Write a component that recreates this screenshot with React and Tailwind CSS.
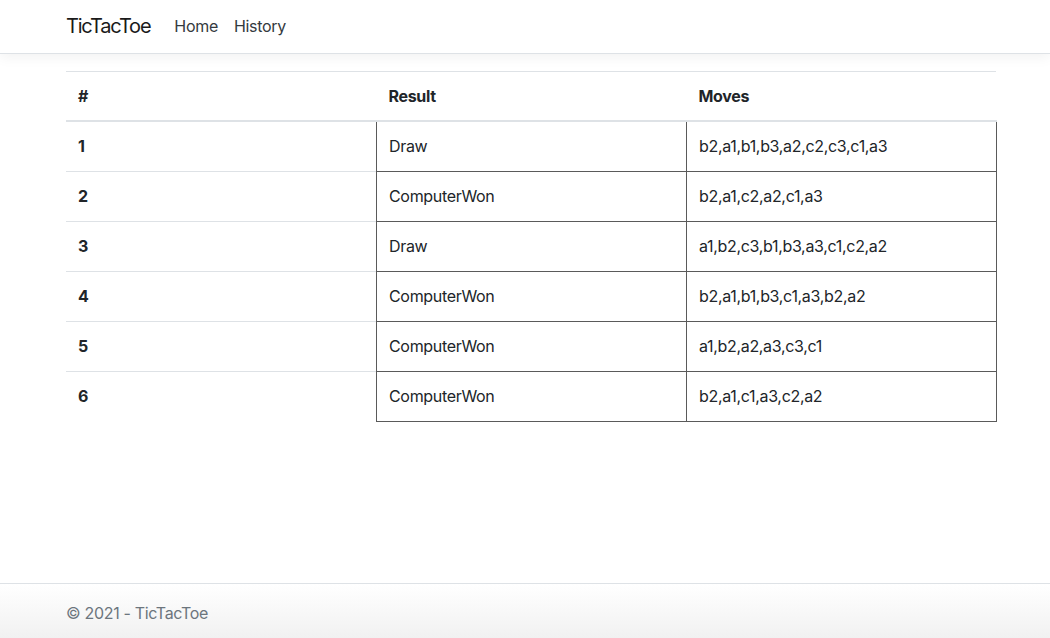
const games = [
  { id: 1, result: "Draw", moves: "b2,a1,b1,b3,a2,c2,c3,c1,a3" },
  { id: 2, result: "ComputerWon", moves: "b2,a1,c2,a2,c1,a3" },
  { id: 3, result: "Draw", moves: "a1,b2,c3,b1,b3,a3,c1,c2,a2" },
  { id: 4, result: "ComputerWon", moves: "b2,a1,b1,b3,c1,a3,b2,a2" },
  { id: 5, result: "ComputerWon", moves: "a1,b2,a2,a3,c3,c1" },
  { id: 6, result: "ComputerWon", moves: "b2,a1,c1,a3,c2,a2" },
];

const App = () => {
  return (
    <div
      className="h-[638px] flex flex-col overflow-hidden bg-white text-[#212529] text-base leading-6 tracking-[-0.02em]"
      style={{ fontFamily: "Inter, 'Liberation Sans', sans-serif" }}
    >
      {/* Navbar */}
      <header className="h-[54px] shrink-0 border-b border-[#dee2e6] bg-white shadow-[0_4px_12px_rgba(0,0,0,0.05)] relative z-10">
        <nav className="ml-[66px] w-[930px] h-full pb-[2px] flex items-center">
          <a className="text-[20px] leading-[30px] tracking-[-0.06em] text-[#1a1a1a] mr-4">TicTacToe</a>
          <ul className="flex">
            <li>
              <a className="px-2 text-[#343a40]">Home</a>
            </li>
            <li>
              <a className="px-2 text-[#343a40]">History</a>
            </li>
          </ul>
        </nav>
      </header>

      {/* Tabla de partidas */}
      <main className="flex-1">
        <div className="ml-[66px] w-[930.5px] mt-[17px]">
          <table className="w-full border-collapse table-fixed">
            <colgroup>
              <col className="w-[310.5px]" />
              <col className="w-[310px]" />
              <col />
            </colgroup>
            <thead>
              <tr>
                <th className="text-left font-bold p-3 border-t border-b-2 border-[#dee2e6]">#</th>
                <th className="text-left font-bold p-3 border-t border-b-2 border-[#dee2e6]">Result</th>
                <th className="text-left font-bold p-3 border-t border-b-2 border-[#dee2e6]">Moves</th>
              </tr>
            </thead>
            <tbody className="leading-[25px]">
              {games.map((g) => (
                <tr key={g.id}>
                  <td className="p-3 font-bold border-t border-[#dee2e6]">{g.id}</td>
                  <td className="p-3 border border-[#5a5a5a]">{g.result}</td>
                  <td className="p-3 border border-[#5a5a5a]">{g.moves}</td>
                </tr>
              ))}
            </tbody>
          </table>
        </div>
      </main>

      {/* Footer */}
      <footer className="h-[55px] shrink-0 border-t border-[#dee2e6] bg-gradient-to-b from-white to-[#f1f1f1] text-[#6c757d]">
        <div className="ml-[66px] pt-[17px]">© 2021 - TicTacToe</div>
      </footer>
    </div>
  );
};

export default App;
